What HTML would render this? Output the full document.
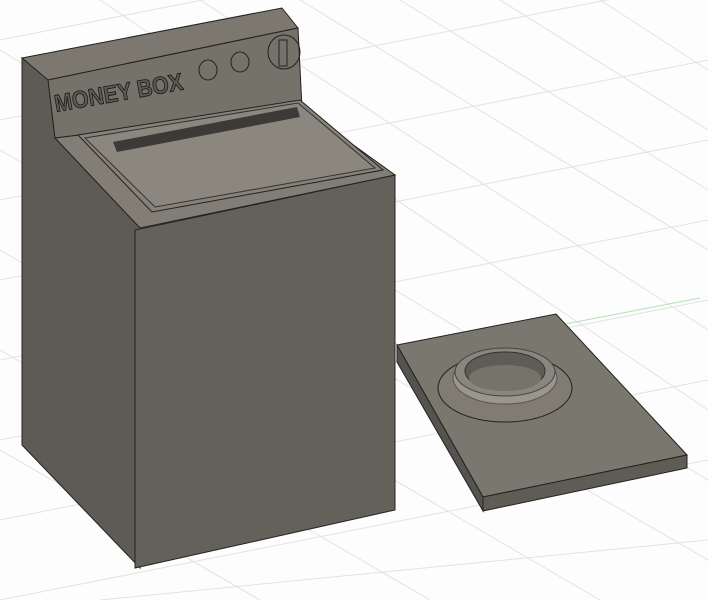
<!DOCTYPE html>
<html><head><style>html,body{margin:0;padding:0;background:#fff;width:708px;height:600px;overflow:hidden}</style></head>
<body>
<svg width="708" height="600" viewBox="0 0 708 600" xmlns="http://www.w3.org/2000/svg">
<rect width="708" height="600" fill="#fdfdfd"/>
<g stroke="#e2e2e2" stroke-width="1">
<path d="M0 40L708 -100M0 120L708 -20M0 200L708 60M0 280L708 140M0 360L708 220M0 440L708 300M0 520L708 380M0 600L708 460M100 600L708 540"/>
<path d="M300 0L708 250M200 0L708 330M400 0L708 190M500 0L708 130M600 0L708 70M100 0L708 410M0 50L708 480M0 150L708 560M0 250L600 600M0 350L430 600M0 450L260 600"/>
</g>
<path d="M560 325L700 298" stroke="#b5e0b5" stroke-width="1"/>
<!-- plate -->
<polygon points="397,345 556,314 687,455 483,497" fill="#7a776e" stroke="#222" stroke-width="1"/>
<polygon points="483,497 687,455 687,468 483,511" fill="#5e5c55" stroke="#222" stroke-width="1"/>
<polygon points="397,345 483,497 483,511 397,362" fill="#55534d" stroke="#222" stroke-width="1"/>
<ellipse cx="505" cy="388" rx="67" ry="34" fill="#807c73" stroke="#222"/>
<ellipse cx="505" cy="378" rx="52" ry="26" fill="#9a968d" stroke="#555"/>
<ellipse cx="505" cy="372" rx="50" ry="24" fill="#8a867d" stroke="#444"/>
<ellipse cx="505" cy="371" rx="40" ry="19" fill="#5f5c55" stroke="#333"/>
<ellipse cx="505" cy="378" rx="36" ry="13" fill="#76736a"/>
<!-- box -->
<polygon points="22,58 48,78 55,138 140,228 140,568 22,445" fill="#5d5b54" stroke="#222"/>
<polygon points="135,230 395,175 395,510 135,568" fill="#64615a" stroke="#222"/>
<polygon points="22,58 282,8 298,28 48,80" fill="#7c786f" stroke="#222"/>
<polygon points="48,80 298,28 302,108 55,138" fill="#75726a" stroke="#222"/>
<polygon points="55,138 302,108 395,175 140,228" fill="#827e75" stroke="#222"/>
<polygon points="78,135 300,100 383,170 152,212" fill="#868279" stroke="#222"/>
<polygon points="85,138 298,103 375,168 155,207" fill="#8b877e" stroke="#333"/>
<polygon points="113,142 297,107 300,117 117,152" fill="#3b3a36"/>
<text x="56" y="112" textLength="130" lengthAdjust="spacingAndGlyphs" font-family="Liberation Sans, sans-serif" font-size="24" font-weight="bold" fill="#5f5c55" stroke="#1a1a1a" stroke-width="0.9" transform="rotate(-10 56 112)">MONEY BOX</text>
<ellipse cx="208" cy="70" rx="9" ry="10" fill="none" stroke="#222"/>
<ellipse cx="240" cy="62" rx="9" ry="10" fill="none" stroke="#222"/>
<ellipse cx="284" cy="52" rx="16" ry="17" fill="none" stroke="#222"/>
<rect x="279" y="40" width="8" height="26" fill="none" stroke="#222"/>
</svg>
</body></html>
